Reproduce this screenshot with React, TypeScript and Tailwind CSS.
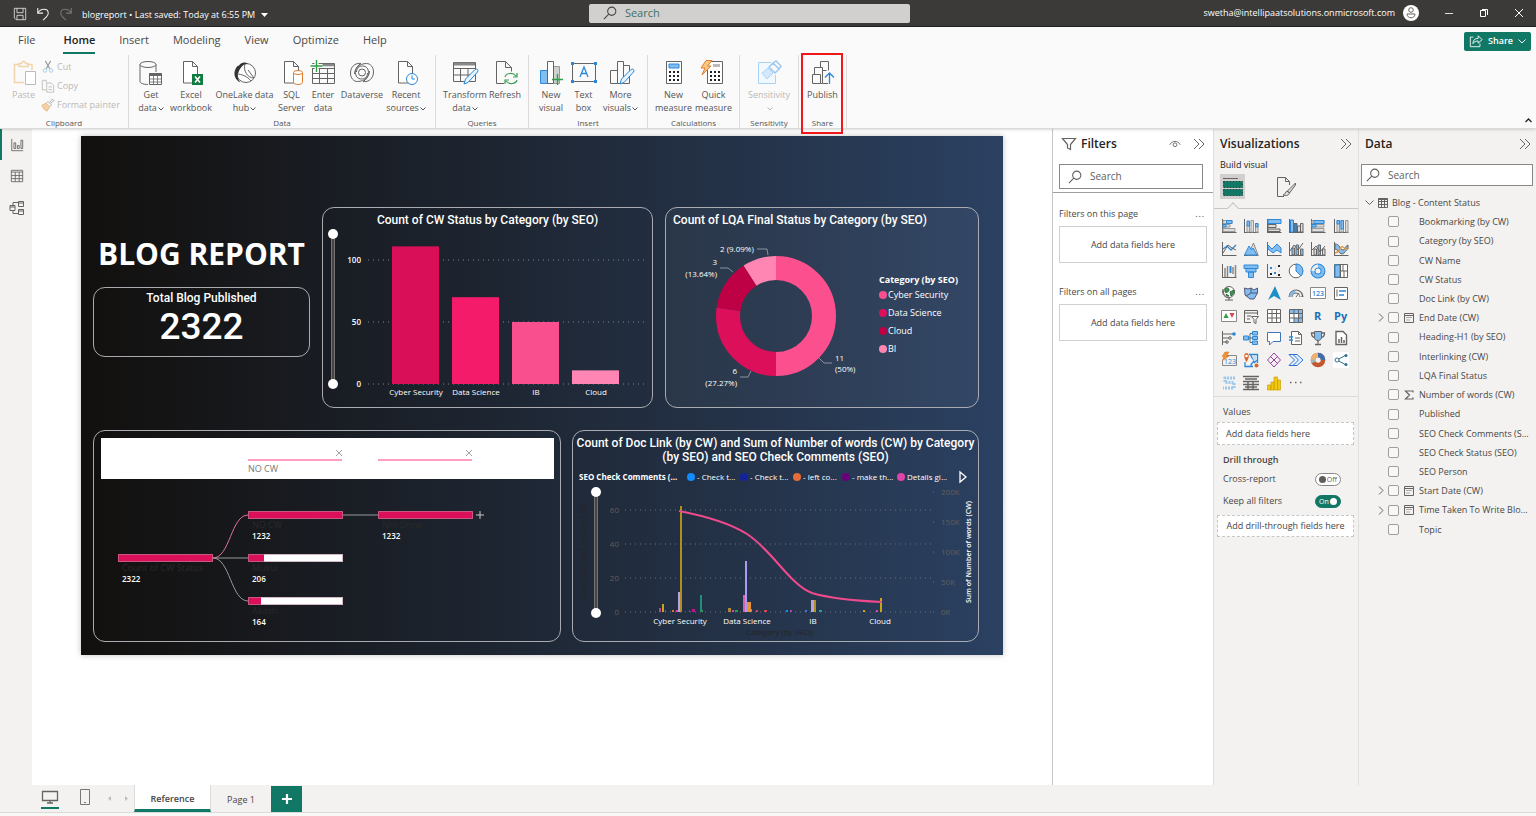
import React from "react";
import clsx from "clsx";

const DARK = "#666462";
const BLUE = "#2b88d8";
const SKY = "#83bdf0";

/* ---------- small helpers ---------- */

interface IconProps {
  size?: number;
  box?: number;
  className?: string;
  children: React.ReactNode;
}

const Icon = ({ size = 16, box = 16, className, children }: IconProps) => (
  <svg
    width={size}
    height={size}
    viewBox={`0 0 ${box} ${box}`}
    fill="none"
    stroke={DARK}
    aria-hidden="true"
    className={clsx("shrink-0 overflow-visible", className)}
  >
    {children}
  </svg>
);

const SearchIcon = ({ className }: { className?: string }) => (
  <Icon size={14} className={className}>
    <circle cx="10" cy="6" r="4.7" stroke="currentColor" strokeWidth="1.2" />
    <path d="M6.6 9.4 1 15" stroke="currentColor" strokeWidth="1.2" />
  </Icon>
);

const DoubleChevron = () => (
  <Icon size={12} box={12}>
    <path d="m1 1 5 5-5 5M6 1l5 5-5 5" />
  </Icon>
);

const Caret = () => (
  <svg width="6" height="4" viewBox="0 0 6 4" fill="none" stroke="currentColor" className="ml-px inline-block">
    <path d="m.5.5 2.5 2.5L5.5.5" />
  </svg>
);

/* ---------- ribbon icons, drawn on a 26px box ---------- */

const Doc = () => (
  <path d="M5.500 1.500h9l5 5v16.500h-14zM14.500 1.500v5h5" fill="#fff" />
);

const Pencil = () => (
  <path d="m12 24 1.500-5L23 9.500q1.500-1 2.500 0t0 2.500L16 22.500z" fill="#e6f2fc" stroke={BLUE} />
);

const icons = {
  getData: (
    <>
      <ellipse cx="10" cy="4.500" rx="8" ry="3" />
      <path d="M2 4.500v17c0 1.500 3 3 8 3M18 4.500V12" />
      <path d="M11.500 13.500h12v11h-12z" fill="#fff" />
      <path d="M11.500 14.500h12" strokeWidth="3" />
      <path d="M11.500 19h12M11.500 22h12M15.500 16v8M19.500 16v8" strokeWidth=".8" />
    </>
  ),
  excel: (
    <>
      <Doc />
      <path d="M14 14h11v11H14z" fill="#107c41" stroke="none" />
      <path d="m17 16.500 5 6M22 16.500l-5 6" stroke="#fff" strokeWidth="1.600" />
    </>
  ),
  onelake: (
    <>
      <circle cx="14" cy="13" r="9.500" fill="#fff" />
      <path d="M8 9C5 14 5 19 8.500 22.500 3 20 1 14 3.500 9 4.500 6.500 6 5.500 7 5.500c2-3.500 7-4 9-1.500-3-.5-6 1.500-8 5z" fill="#333" stroke="none" />
      <path d="M13 4c-2 6 2 14 9 14M22 18 16 10M5 14c4 0 10 2 14 7" />
    </>
  ),
  sql: (
    <>
      <Doc />
      <path d="M14.500 12.500v10c0 1 2 2 4.500 2s4.500-1 4.500-2v-10z" fill="#fff" stroke="#e07c30" />
      <ellipse cx="19" cy="12.500" rx="4.500" ry="2" fill="#fff" stroke="#e07c30" />
    </>
  ),
  enter: (
    <>
      <path d="M2.500 3.500h22v20h-22zM2.500 8.500h22M2.500 13.500h22M2.500 18.500h22M9.500 8.500v15M17.500 8.500v15" />
      <path d="M9 5h15" strokeWidth="2.500" stroke="#888" />
      <path d="M6.500 0v12M.5 6h12" stroke="#fff" strokeWidth="4" />
      <path d="M6.500 0v12M.5 6h12" stroke="#2ea043" strokeWidth="1.400" />
    </>
  ),
  dataverse: (
    <>
      <circle cx="13" cy="12.500" r="3.500" />
      <path d="M18.500 13c0 4-3 6-6 6-4 0-6-3-6-6.500C6.500 8 9 5 12 3.500 6 2.500 1.500 7 1.500 13c0 5 3 8.500 7 8.500 7 0 12-5 12-10.500" />
      <path d="M7.500 12c0-4 3-6 6-6 4 0 6 3 6 6.500 0 4.500-2.500 7.500-5.500 9 6 1 10.500-3.500 10.500-9.500 0-5-3-8.500-7-8.500-7 0-12 5-12 10.500" />
    </>
  ),
  recent: (
    <>
      <Doc />
      <circle cx="19" cy="19" r="5.500" fill="#fff" stroke={BLUE} />
      <path d="M19 15.500V19h3" stroke={BLUE} />
    </>
  ),
  transform: (
    <>
      <path d="M1.500 2.500h22v19h-22zM1.500 8.500h22M1.500 15h22M8.500 8.500v13M16 8.500v13" />
      <path d="M2 4h21" strokeWidth="3" stroke="#888" />
      <Pencil />
    </>
  ),
  refresh: (
    <>
      <path d="M12 23.500H4.500v-22h9l6 6v4M13.500 1.500v6h6" />
      <path d="M13 17c1-4 8-5 11-1M25 13v4h-4M25 20c-1 4-8 5-11 1M13 24v-4h4" stroke="#3a9a52" strokeWidth="1.200" />
    </>
  ),
  newVisual: (
    <>
      <path d="M2.500 10.500h7v13h-7z" fill={SKY} stroke={BLUE} />
      <path d="M15.500 6.500h6v17h-6z" fill="#d0d0d0" stroke="#999" />
      <path d="M9.500 1.500h6v22h-6z" fill="#fff" />
      <path d="M19.500 14v11M14 19.500h11" stroke="#2ea043" strokeWidth="1.400" />
    </>
  ),
  textBox: (
    <>
      <path d="M1.500 3.500h23v18h-23z" stroke="#666" />
      <path d="m9 17 4-10 4 10M10.500 13.500h5" stroke={BLUE} strokeWidth="1.300" />
      <path d="M0 2h3v3H0zM23 2h3v3h-3zM0 20h3v3H0zM23 20h3v3h-3z" fill={BLUE} stroke="none" />
    </>
  ),
  moreVisuals: (
    <>
      <path d="M2.500 10.500h7v13h-7zM9.500 1.500h6v22h-6zM15.500 5.500h6v18h-6z" />
      <Pencil />
    </>
  ),
  newMeasure: (
    <>
      <path d="M5.500 1.500h15v22h-15z" fill="#fff" />
      <path d="M8 4h10v4H8z" fill={SKY} stroke={BLUE} />
      <path d="M8 12h10M8 16h10M8 20h10" stroke="#222" strokeWidth="2" strokeDasharray="2 2" />
    </>
  ),
  quickMeasure: (
    <>
      <path d="M6.500 1.500h15v22h-15z" fill="#fff" />
      <path d="M12 5.500h7" stroke="#bbb" strokeWidth="3" />
      <path d="M9 12h10M9 16h10M9 20h10" stroke="#222" strokeWidth="2" strokeDasharray="2 2" />
      <path d="M5 .5h6L6.500 6H10L1 15l3-7H0z" fill="#fcc77e" stroke="#e07c30" />
    </>
  ),
  sensitivity: (
    <>
      <path d="M15 2.500H2.500v21h17V15" stroke="#a9d3f5" fill="#f1f8fe" />
      <path d="m6 13 6-5 5 5-6 6z" stroke="#a9d3f5" fill="#d3e8fa" />
      <path d="m13 7 4-4 6 6-4 4zM17 3l3-2 5 5-2 3" stroke="#9cc8ec" strokeWidth="1.500" />
    </>
  ),
  publish: (
    <>
      <path d="M2.500 14.500h8v9h-8zM4.500 14.500v-7h8v16h-2M10.500 7.500v-6h8v9M12.500 12.500v-2h4M12.500 23.500H18" />
      <path d="M19.500 24V13M15 17.500l4.500-4.500 4.500 4.500" stroke={BLUE} strokeWidth="1.300" />
    </>
  ),
};

interface RibbonItem {
  icon: keyof typeof icons;
  lines: string[];
  width: string;
  caret?: boolean;
  disabled?: boolean;
}

interface RibbonGroupData {
  name: string;
  className: string;
  items: RibbonItem[];
}

const ribbon: RibbonGroupData[] = [
  {
    name: "Data",
    className: "w-[307px]",
    items: [
      { icon: "getData", lines: ["Get", "data"], width: "w-[40px]", caret: true },
      { icon: "excel", lines: ["Excel", "workbook"], width: "w-[40px]" },
      { icon: "onelake", lines: ["OneLake data", "hub"], width: "w-[67px]", caret: true },
      { icon: "sql", lines: ["SQL", "Server"], width: "w-[27px]" },
      { icon: "enter", lines: ["Enter", "data"], width: "w-[36px]" },
      { icon: "dataverse", lines: ["Dataverse"], width: "w-[42px]" },
      { icon: "recent", lines: ["Recent", "sources"], width: "w-[46px]", caret: true },
    ],
  },
  {
    name: "Queries",
    className: "w-[93px]",
    items: [
      { icon: "transform", lines: ["Transform", "data"], width: "w-[46px]", caret: true },
      { icon: "refresh", lines: ["Refresh"], width: "w-[34px]" },
    ],
  },
  {
    name: "Insert",
    className: "w-[119px]",
    items: [
      { icon: "newVisual", lines: ["New", "visual"], width: "w-[31px]" },
      { icon: "textBox", lines: ["Text", "box"], width: "w-[34px]" },
      { icon: "moreVisuals", lines: ["More", "visuals"], width: "w-[40px]", caret: true },
    ],
  },
  {
    name: "Calculations",
    className: "w-[92px]",
    items: [
      { icon: "newMeasure", lines: ["New", "measure"], width: "w-[40px]" },
      { icon: "quickMeasure", lines: ["Quick", "measure"], width: "w-[40px]" },
    ],
  },
  {
    name: "Sensitivity",
    className: "w-[59px]",
    items: [{ icon: "sensitivity", lines: ["Sensitivity", ""], width: "w-[46px]", caret: true, disabled: true }],
  },
  {
    name: "Share",
    className: "w-[48px]",
    items: [{ icon: "publish", lines: ["Publish"], width: "w-[40px]" }],
  },
];

const RibbonButton = ({ icon, lines, width, caret, disabled }: RibbonItem) => (
  <button
    type="button"
    disabled={disabled}
    className={clsx(
      "flex flex-col items-center whitespace-nowrap leading-[13px]",
      width,
      disabled ? "text-[#bbb9b7]" : "text-[#555]"
    )}
  >
    <Icon size={26} box={26} className="mb-0.5">
      {icons[icon]}
    </Icon>
    {lines.map((line, index) => (
      <span key={index}>
        {line}
        {caret && index === lines.length - 1 && <Caret />}
      </span>
    ))}
  </button>
);

const RibbonGroup = ({ name, className, items }: RibbonGroupData) => (
  <section
    aria-label={name}
    className={clsx(
      "relative flex shrink-0 flex-col justify-between border-r border-[#dddbd9] pt-[5px]",
      className
    )}
  >
    <div className={clsx("flex items-start", name === "Data" ? "pl-0.5" : "justify-center")}>
      {items.map((item) => (
        <RibbonButton key={item.icon} {...item} />
      ))}
    </div>
    <span className="text-center text-[8px] leading-[10px] text-[#555]">{name}</span>
    {name === "Share" && (
      <span className="absolute -top-0.5 -bottom-1.5 left-0.5 z-10 w-[42px] border-2 border-[#f0161a]" />
    )}
  </section>
);

const Clipboard = () => (
  <section
    aria-label="Clipboard"
    className="flex w-[129px] shrink-0 flex-col justify-between border-r border-[#dddbd9] pt-[5px]"
  >
    <div className="flex gap-1 pl-2.5 text-[#bbb9b7]">
      <button type="button" disabled className="flex w-[27px] flex-col items-center leading-[13px]">
        <Icon size={26} box={26} className="mb-0.5">
          <path d="M8 4.500H3.500v18H13M17 4.500h4V10M8 6.500v-3h2.500c1-3 3-3 4 0H17v3z" stroke="#f3d3ab" strokeWidth="1.500" />
          <path d="M14.500 11.500h10v13h-10z" fill="#fff" stroke="#bbb" />
        </Icon>
        Paste
      </button>
      <div className="flex flex-col items-start gap-[5px] leading-[14px]">
        <button type="button" disabled className="flex items-center gap-0.5">
          <Icon size={14}>
            <path d="M5 1l5 9M11 1 6 10" stroke="#999" strokeWidth="1.300" />
            <circle cx="4.500" cy="12" r="2" stroke="#9cc8ec" />
            <circle cx="11.500" cy="12" r="2" stroke="#9cc8ec" />
          </Icon>
          Cut
        </button>
        <button type="button" disabled className="flex items-center gap-0.5">
          <Icon size={14}>
            <path d="M6 4V1.500H1.500v11H6M6.500 4.500h5l3 3v7.500h-8zM8.500 9h4M8.500 12h4" stroke="#bbb" />
          </Icon>
          Copy
        </button>
        <button type="button" disabled className="flex items-center gap-0.5 whitespace-nowrap">
          <Icon size={14}>
            <path d="m1 8 5-2 4 4-3 5c-3-1-5-3-6-7z" fill="#f7cfa4" stroke="#e5b98a" />
            <path d="m6 6 2-2 4 4-2 2M10 5l3-4 2 2-4 3" stroke="#aaa" />
          </Icon>
          Format painter
        </button>
      </div>
    </div>
    <span className="text-center text-[8px] leading-[10px] text-[#555]">Clipboard</span>
  </section>
);

/* ---------- window chrome ---------- */

const TitleBar = () => (
  <header className="flex h-[27px] items-center border-b border-[#222] bg-[#3b3a39] text-[9px] text-white">
    <div className="flex flex-[588_1_0] items-center gap-[9px] pt-0.5 pl-[13px]">
      <button type="button" aria-label="Save">
        <Icon size={14}>
          <path d="M1.500 1.500h13v13h-11l-2-2zM4.500 1.500v5h7v-5M4.500 14.500v-5h7v5" stroke="#ddd" />
        </Icon>
      </button>
      <button type="button" aria-label="Undo">
        <Icon size={14}>
          <path d="M2 1v6h6M2 7c3-6 12-6 12 0 0 3-3 5-6 8" stroke="#eee" strokeWidth="1.200" />
        </Icon>
      </button>
      <button type="button" aria-label="Redo" disabled>
        <Icon size={14}>
          <path d="M14 1v6H8M14 7C11 1 2 1 2 7c0 3 3 5 6 8" stroke="#777" strokeWidth="1.200" />
        </Icon>
      </button>
      <span className="flex items-center gap-1.5 pt-0.5">
        blogreport • Last saved: Today at 6:55 PM
        <svg width="7" height="4" viewBox="0 0 7 4" fill="#fff">
          <path d="M0 0h7L3.500 4z" />
        </svg>
      </span>
    </div>
    <label className="flex h-[19px] w-[321px] items-center gap-2 rounded-[2px] bg-[#d2d0ce] pl-3.5 text-[#444]">
      <SearchIcon />
      <input
        type="search"
        aria-label="Search"
        placeholder="Search"
        className="min-w-0 flex-1 bg-transparent text-[11px] outline-none placeholder:text-[#3f6f63]"
      />
    </label>
    <div className="flex flex-[627_1_0] items-center justify-end pr-3">
      <span className="mr-2">swetha@intellipaatsolutions.onmicrosoft.com</span>
      <Icon size={16}>
        <circle cx="8" cy="8" r="8" fill="#fff" stroke="none" />
        <circle cx="8" cy="5" r="2.300" />
        <path d="M4 9h8c0 5-8 5-8 0z" />
      </Icon>
      <div className="ml-[25px] flex items-center gap-[25px]">
        <button type="button" aria-label="Minimize">
          <Icon size={10} box={10}>
            <path d="M1 5.500h8" stroke="#ddd" />
          </Icon>
        </button>
        <button type="button" aria-label="Restore">
          <Icon size={10} box={10}>
            <path d="M1.500 2.500h5v6h-5zM3 1.500h5.500V7" stroke="#fff" />
          </Icon>
        </button>
        <button type="button" aria-label="Close">
          <Icon size={10} box={10}>
            <path d="m1 1 8 8M9 1 1 9" stroke="#fff" />
          </Icon>
        </button>
      </div>
    </div>
  </header>
);

const tabs = ["File", "Home", "Insert", "Modeling", "View", "Optimize", "Help"];

const Ribbon = () => (
  <div className="relative z-10 border-b border-[#dcdad8] bg-[#fafafa] shadow-sm">
    <nav className="flex h-[28px] items-center gap-[24px] pr-[5px] pl-[18px] text-[11px] text-[#4a4846]">
      {tabs.map((tab) => (
        <button
          key={tab}
          type="button"
          className={clsx(
            "h-[25px] border-b-2 leading-[22px]",
            tab === "Home" ? "border-[#117865] font-semibold text-[#222]" : "border-transparent",
            tab === "File" && "mr-1"
          )}
        >
          {tab}
        </button>
      ))}
      <button
        type="button"
        className="ml-auto flex h-[19px] items-center gap-[5px] rounded-[2px] bg-[#117865] px-[5px] text-[9px] font-semibold text-white"
      >
        <Icon size={14}>
          <path d="M5 3.500H1.500v11h11V11M4.500 11c0-4 2-6 6-6V2l4.500 4.500-4.500 4V8c-3 0-5 1-6 3z" stroke="#fff" />
        </Icon>
        Share
        <svg width="8" height="5" viewBox="0 0 8 5" fill="none" stroke="#fff">
          <path d="m.5.5 3.500 3.500L7.500.5" />
        </svg>
      </button>
    </nav>
    <div className="flex h-[73px] text-[9px]">
      <Clipboard />
      {ribbon.map((group) => (
        <RibbonGroup key={group.name} {...group} />
      ))}
      <button type="button" aria-label="Collapse ribbon" className="ml-auto self-end pr-1 pb-1">
        <Icon size={7} box={7}>
          <path d="m.5 5 3-3 3 3" stroke="#222" strokeWidth="1.300" />
        </Icon>
      </button>
    </div>
  </div>
);

const ViewRail = () => (
  <nav className="flex w-8 shrink-0 flex-col bg-[#f3f2f1]">
    <button
      type="button"
      aria-label="Report view"
      className="flex h-[31px] items-center justify-center border-l-2 border-[#117865]"
    >
      <Icon size={14}>
        <path d="M2 1v13.500h13M4.500 12V5.500h2V12zM8.500 12V8.500h2V12zM12.500 12V2.500h2V12z" />
      </Icon>
    </button>
    <button type="button" aria-label="Table view" className="flex h-8 items-center justify-center pl-0.5">
      <Icon size={14}>
        <path d="M1.500 1.500h13v13h-13zM1.500 3.500h13M1.500 7.500h13M1.500 11h13M6 3.500v11M10.500 3.500v11" />
      </Icon>
    </button>
    <button type="button" aria-label="Model view" className="flex h-8 items-center justify-center pl-0.5">
      <Icon size={16}>
        <path d="M1 5.500h5v5H1zM1 7h5M9.500 1.500h5v5h-5zM9.500 3h5M9.500 9.500h5v5h-5zM9.500 11h5M4 5V2.500h5M4 11v2.500h5" />
      </Icon>
    </button>
  </nav>
);

/* ---------- report page visuals ---------- */

const Card = ({ className, ...props }: React.HTMLAttributes<HTMLDivElement>) => (
  <div {...props} className={clsx("overflow-hidden rounded-xl border border-[#a9abb0]", className)} />
);

const VisualTitle = ({ className, children }: { className?: string; children: React.ReactNode }) => (
  <h2
    className={clsx(
      "font-[Roboto,sans-serif] text-[12px] leading-[14px] font-medium text-white",
      className
    )}
  >
    {children}
  </h2>
);

const ZoomSlider = ({ x, top, bottom }: { x: number; top: number; bottom: number }) => (
  <>
    <path d={`M${x} ${top}V${bottom}`} stroke="#a19f9d" strokeWidth="4" />
    <path d={`M${x} ${top}V${bottom}`} stroke="#484644" strokeWidth="3" />
    <circle cx={x} cy={top} r="5" fill="#fff" />
    <circle cx={x} cy={bottom} r="5" fill="#fff" />
  </>
);

const statusBars = [
  { name: "Cyber Security", value: 111, color: "#d90f58" },
  { name: "Data Science", value: 70, color: "#f41c6a" },
  { name: "IB", value: 50, color: "#f94f8e" },
  { name: "Cloud", value: 11, color: "#ff86b4" },
];

const StatusChart = () => (
  <Card>
    <VisualTitle className="pt-[5px] text-center">Count of CW Status by Category (by SEO)</VisualTitle>
    <svg viewBox="1 0 329 180" className="w-full text-[8px]" fill="#fff">
      {[100, 50, 0].map((tick) => (
        <g key={tick}>
          <text x="39" y={160 - tick * 1.24} textAnchor="end" fontWeight="600">
            {tick}
          </text>
          <path d={`M46 ${157 - tick * 1.24}H325`} stroke="#7d8592" strokeDasharray="1 4" />
        </g>
      ))}
      {statusBars.map(({ name, value, color }, index) => (
        <g key={name}>
          <rect x={70 + index * 60} y={157 - value * 1.24} width="47" height={value * 1.24} fill={color} />
          <text x={94 + index * 60} y="168" textAnchor="middle">
            {name}
          </text>
        </g>
      ))}
      <ZoomSlider x={11} top={7} bottom={157} />
    </svg>
  </Card>
);

const slices = [
  { name: "Cyber Security", count: 11, start: 0, color: "#fb4f8e" },
  { name: "Data Science", count: 6, start: 11, color: "#dc0f5a" },
  { name: "Cloud", count: 3, start: 17, color: "#be0045" },
  { name: "BI", count: 2, start: 20, color: "#ff86b2" },
];

const LqaChart = () => (
  <Card className="bg-white/4">
    <VisualTitle className="pt-[5px] pl-[7px]">Count of LQA Final Status by Category (by SEO)</VisualTitle>
    <svg viewBox="0 0 312 180" className="w-full text-[8px]" fill="#fff">
      <g fill="none" strokeWidth="24" transform="rotate(-90 110 89)">
        {slices.map(({ name, count, start, color }) => (
          <circle
            key={name}
            cx="110"
            cy="89"
            r="48"
            pathLength="22"
            stroke={color}
            strokeDasharray={`${count} ${22 - count}`}
            strokeDashoffset={-start}
          />
        ))}
      </g>
      <path
        d="M91 22h10l1 6M54 41h8l5 4M153 131l5 5h8M74 150h8l3-6"
        fill="none"
        stroke="#8a929f"
      />
      <text x="54" y="25">2 (9.09%)</text>
      <text x="51" y="38" textAnchor="end">3</text>
      <text x="51" y="50" textAnchor="end">(13.64%)</text>
      <text x="169" y="134">11</text>
      <text x="169" y="145">(50%)</text>
      <text x="71" y="147" textAnchor="end">6</text>
      <text x="71" y="159" textAnchor="end">(27.27%)</text>
      <text x="213" y="56" fontWeight="700" className="text-[9px]">
        Category (by SEO)
      </text>
      {slices.map(({ name, color }, index) => (
        <g key={name}>
          <circle cx="217" cy={68 + index * 18} r="4" fill={color} />
          <text x="222" y={71 + index * 18} className="text-[9px]">
            {name}
          </text>
        </g>
      ))}
    </svg>
  </Card>
);

const treeNodes = [
  { name: "Count of CW Status", value: 2322, x: 24, y: 123, fill: 95 },
  { name: "NO CW", value: 1232, x: 154, y: 80, fill: 95 },
  { name: "Mukul", value: 206, x: 154, y: 123, fill: 16 },
  { name: "Akash", value: 164, x: 154, y: 166, fill: 13 },
  { name: "Not Done", value: 1232, x: 284, y: 80, fill: 95 },
];

const StatusTree = () => (
  <Card>
    <svg viewBox="0 0 466 210" className="w-full text-[9px]" fill="none">
      <path d="M7 7h453v41H7z" fill="#fff" />
      <path d="M154 29h94M284 29h94" stroke="#ff7fae" strokeWidth="1.500" />
      <path d="m242 19 6 6m0-6-6 6M372 19l6 6m0-6-6 6" stroke="#a5a3a1" />
      <text x="154" y="41" fill="#777" className="text-[9px]">
        NO CW
      </text>
      <path d="M119 127c17 0 18-43 35-43" stroke="#e0709c" />
      <path d="M119 127h35M119 127c17 0 18 43 35 43M248 84h36" stroke="#9a9896" />
      {treeNodes.map(({ name, value, x, y, fill }) => (
        <g key={name}>
          <rect x={x} y={y} width="95" height="8" fill="#fff" />
          <rect x={x} y={y} width={fill} height="8" fill="#dc0f5a" />
          <path d={`M${x + 0.5} ${y + 0.5}h94v7h-94z`} stroke="#b58a9b" strokeOpacity=".6" />
          <text x={x + 4} y={y + 17} fill="#2b2928">
            {name}
          </text>
          <text x={x + 4} y={y + 28} fill="#fff" fontWeight="600" className="text-[8px]">
            {value}
          </text>
        </g>
      ))}
      <path d="M382 84h8M386 80v8" stroke="#c8c6c4" />
    </svg>
  </Card>
);

const commentLegend = [
  { label: "- Check t...", x: 118, color: "#118dff" },
  { label: "- Check t...", x: 171, color: "#12239e" },
  { label: "- left co...", x: 224, color: "#e66c37" },
  { label: "- make th...", x: 273, color: "#6b007b" },
  { label: "Details gi...", x: 328, color: "#e044a7" },
];

/* [x, width, height, colour] of every thin column */
const columns: [number, number, number, string][] = [
  [86, 2, 4, "#b0449a"],
  [89, 2, 8, "#c9a415"],
  [92, 1, 2, "#744ec2"],
  [99, 2, 2, "#e66c37"],
  [103, 2, 2, "#e044a7"],
  [105, 2, 20, "#b5a1e6"],
  [107, 2, 106, "#b08f1c"],
  [116, 1, 2, "#3b5bd0"],
  [119, 3, 3, "#c0148c"],
  [127, 2, 17, "#1f8f7a"],
  [129, 1, 2, "#3a9a52"],
  [155, 3, 4, "#a8883a"],
  [159, 2, 2, "#e044a7"],
  [162, 3, 2, "#1aab40"],
  [170, 2, 17, "#d860b0"],
  [172, 2, 51, "#a99cf0"],
  [174, 4, 10, "#e8923a"],
  [178, 1, 3, "#15c6b0"],
  [183, 2, 2, "#d64550"],
  [191, 3, 2, "#d64550"],
  [213, 2, 2, "#118dff"],
  [217, 2, 2, "#b0449a"],
  [232, 2, 2, "#3b7be0"],
  [238, 3, 12, "#b5a1e6"],
  [241, 2, 12, "#b08f1c"],
  [246, 3, 2, "#15a6a0"],
  [290, 2, 2, "#c9a415"],
  [303, 2, 2, "#e044a7"],
  [307, 2, 14, "#c9a415"],
];

const DocLinkChart = () => (
  <Card>
    <VisualTitle className="pt-[5px] text-center">
      Count of Doc Link (by CW) and Sum of Number of words (CW) by Category (by SEO) and SEO Check Comments (SEO)
    </VisualTitle>
    <svg viewBox="0 0 405 177" className="w-full text-[8px]" fill="#fff">
      <text x="6" y="16" fontWeight="700">SEO Check Comments (...</text>
      {commentLegend.map(({ label, x, color }) => (
        <g key={x}>
          <circle cx={x} cy="13" r="4" fill={color} />
          <text x={x + 6} y="16">
            {label}
          </text>
        </g>
      ))}
      <path d="m387 8 6 5-6 5z" fill="none" stroke="#fff" strokeWidth="1.300" />
      {[60, 40, 20, 0].map((tick) => (
        <g key={tick}>
          <text x="46" y={151 - tick * 1.7} textAnchor="end" fill="#605e5c">
            {tick}
          </text>
          <path d={`M52 ${148 - tick * 1.7}H362`} stroke="#66707f" strokeDasharray="1 4" />
        </g>
      ))}
      {[200, 150, 100, 50, 0].map((tick) => (
        <g key={tick}>
          <text x="368" y={151 - tick * 0.6} fill="#605e5c">
            {tick}K
          </text>
          <path d={`M360 ${148 - tick * 0.6}h1`} stroke="#66707f" />
        </g>
      ))}
      {columns.map(([x, width, height, color]) => (
        <rect key={x} x={x} y={148 - height} width={width} height={height} fill={color} />
      ))}
      <path
        d="M106 47c26 5 49 11 68 23 25 16 43 51 65 59 20 6 48 8 70 9"
        fill="none"
        stroke="#f04a8c"
        strokeWidth="2"
      />
      <text x="107" y="160" textAnchor="middle">Cyber Security</text>
      <text x="174" y="160" textAnchor="middle">Data Science</text>
      <text x="240" y="160" textAnchor="middle">IB</text>
      <text x="307" y="160" textAnchor="middle">Cloud</text>
      <text x="206" y="171" textAnchor="middle" fill="#252423">Category (by SEO)</text>
      <text transform="translate(13 88) rotate(-90)" textAnchor="middle" fill="#252423">
        Count of Doc Link (by CW)
      </text>
      <text transform="translate(398 88) rotate(-90)" textAnchor="middle" fontWeight="600" className="text-[7px]">
        Sum of Number of words (CW)
      </text>
      <ZoomSlider x={23} top={28} bottom={149} />
    </svg>
  </Card>
);

const ReportPage = () => (
  <article className="flex aspect-[922/519] flex-col gap-[22px] bg-linear-to-r from-[#12100e] to-[#2b4162] pt-[71px] pr-6 pl-3 text-white shadow-[0_0_6px_rgba(0,0,0,0.25)]">
    <div className="grid grid-cols-[217fr_331fr_314fr] gap-3">
      <div className="flex flex-col">
        <h1 className="pt-[26px] pb-[13px] text-center text-[30px] leading-[41px] font-bold whitespace-nowrap">
          BLOG REPORT
        </h1>
        <Card className="h-[70px] text-center font-[Roboto,sans-serif]">
          <VisualTitle className="pt-[3px]">Total Blog Published</VisualTitle>
          <p className="pt-0.5 text-[37px] leading-[40px] font-medium">2322</p>
        </Card>
      </div>
      <StatusChart />
      <LqaChart />
    </div>
    <div className="grid grid-cols-[468fr_407fr] gap-[11px]">
      <StatusTree />
      <DocLinkChart />
    </div>
  </article>
);

/* ---------- filters pane ---------- */

const PaneSearch = ({ label, className }: { label: string; className?: string }) => (
  <label
    className={clsx("flex items-center gap-2 border border-[#8a8886] bg-white text-[#605e5c]", className)}
  >
    <SearchIcon />
    <input
      type="search"
      aria-label={label}
      placeholder="Search"
      className="min-w-0 flex-1 bg-transparent text-[10px] outline-none placeholder:text-[#605e5c]"
    />
  </label>
);

const FilterWell = ({ title }: { title: string }) => (
  <section className="mb-[22px]">
    <div className="flex h-[19px] items-start justify-between pr-0.5 leading-[13px]">
      <h3>{title}</h3>
      <button type="button" aria-label="More options" className="tracking-widest">
        ...
      </button>
    </div>
    <div className="flex h-[37px] items-center justify-center border border-[#d2d0ce] bg-white">
      Add data fields here
    </div>
  </section>
);

const FiltersPane = () => (
  <aside className="w-[161px] shrink-0 border-l border-[#c8c6c4] bg-white text-[9px] text-[#484644]">
    <div className="flex h-[35px] items-center pr-2 pb-1.5 pl-2">
      <Icon size={16}>
        <path d="M1.500 2.500h13L9.500 8.500v5l-3-1.500V8.500z" strokeWidth="1.200" />
      </Icon>
      <h2 className="ml-1 flex-1 text-[12px] font-semibold text-[#252423]">Filters</h2>
      <Icon size={12} className="mr-3">
        <path d="M1 9c3-6 11-6 14 0" strokeWidth="1.200" />
        <circle cx="8" cy="9" r="2.500" strokeWidth="1.200" />
      </Icon>
      <DoubleChevron />
    </div>
    <div className="border-b border-[#a19f9d] pr-2.5 pb-[3px] pl-1.5">
      <PaneSearch label="Search filters" className="h-[25px] pl-2" />
    </div>
    <div className="px-1.5 pt-3.5">
      <FilterWell title="Filters on this page" />
      <FilterWell title="Filters on all pages" />
    </div>
  </aside>
);

/* ---------- visualizations pane ---------- */

const Axis = () => <path d="M1.500 1v14M1 14.500h14.500" />;

const visuals: { name: string; art: React.ReactNode }[] = [
  { name: "Stacked bar chart", art: <><Axis /><path d="M2 2.500h9v3H2zM2 6.500h7v2.500H2zM2 10.500h12v3H2z" fill="#ddd" stroke="#999" /><path d="M5.500 2.500H11v3H5.500zM2 6.500h3v2.500H2z" fill={SKY} stroke={BLUE} /></> },
  { name: "Stacked column chart", art: <><Axis /><path d="M4 6.500h2.500V14H4zM8 2.500h2.500V14H8zM12.500 5.500H15V14h-2.500z" fill="#ddd" stroke="#999" /><path d="M4 3h2.500v5H4zM12.500 5.500H15V9h-2.500z" fill={SKY} stroke={BLUE} /></> },
  { name: "Clustered bar chart", art: <><Axis /><path d="M2 1.500h13v4H2z" fill={SKY} stroke={BLUE} /><path d="M2 6.500h8v3H2zM2 11h12v2.500H2z" fill="#ddd" /></> },
  { name: "Clustered column chart", art: <><Axis /><path d="M2.500 2h3v12h-3z" fill={SKY} stroke={BLUE} /><path d="M6 5.500h3V14H6z" fill={BLUE} /><path d="M9.500 8h3v6h-3zM12.500 5.500h2.500V14h-2.500z" fill="#ddd" /></> },
  { name: "100% stacked bar chart", art: <><Axis /><path d="M2 2.500h12v3H2zM2 6.500h12v2.500H2zM2 10.500h12v3H2z" fill="#ddd" stroke="#999" /><path d="M4 2.500h10v3H4zM2 6.500h4v2.500H2z" fill={SKY} stroke={BLUE} /></> },
  { name: "100% stacked column chart", art: <><Axis /><path d="M4 2.500h2.500V14H4zM8 2.500h2.500V14H8zM12.500 2.500H15V14h-2.500z" fill="#ddd" stroke="#999" /><path d="M4 2.500h2.500V6H4zM8 2.500h2.500V11H8z" fill={SKY} stroke={BLUE} /></> },
  { name: "Line chart", art: <><Axis /><path d="m2 8 4-3 4 4 5-5" stroke={BLUE} strokeWidth="1.300" /><path d="m2 12 5-8 4 3 4 2" /></> },
  { name: "Area chart", art: <><path d="M1 14.500h14.500" /><path d="m5 14 5.500-12L15 14z" fill="#ddd" stroke="#888" /><path d="M1.500 14 6 5l2.500 4L10 7l4 7z" fill={SKY} stroke={BLUE} /></> },
  { name: "Stacked area chart", art: <><Axis /><path d="m2 4 4 4 5-5 4 4v5l-4-3-4 3-5-4z" fill={SKY} stroke={BLUE} /></> },
  { name: "Line and stacked column chart", art: <><Axis /><path d="M4 7h2.500v7H4zM8 4h2.500v10H8zM12.500 8H15v6h-2.500z" fill={SKY} stroke="#666" /><path d="m2 10 4-6 4 5 5-7" /></> },
  { name: "Line and clustered column chart", art: <><Axis /><path d="M4 8h2.500v6H4zM12.500 8H15v6h-2.500z" fill="#ddd" /><path d="M8 4h2.500v10H8z" fill={SKY} /><path d="m2 9 4-4 4 6 5-6" /></> },
  { name: "Ribbon chart", art: <><Axis /><path d="M2 3c5 0 5 6 8 6 2 0 3-5 5-5v4c-2 0-3 5-6 5-3 0-4-5-7-5z" fill={SKY} stroke="#666" /><path d="M2 12c5 0 5-8 8-6s3 3 5 2" stroke="#e8923a" strokeWidth="1.500" /></> },
  { name: "Waterfall chart", art: <><Axis /><path d="M4 14V5M6.500 14V3M12 11V4M14.500 14V2" strokeWidth="1.500" stroke="#888" /><path d="M9.500 3v7" stroke={BLUE} strokeWidth="2" /></> },
  { name: "Funnel", art: <path d="M1 2h14v3.500H1zM3 5.500h10V9H3zM5.500 9h5v5.500h-5z" fill={SKY} stroke={BLUE} /> },
  { name: "Scatter chart", art: <><Axis /><path d="M4 5h2M8 10h2" stroke={BLUE} strokeWidth="2" /><path d="M12 3h2M4 11h2M12 12h2" stroke="#222" strokeWidth="2" /><path d="M9 5h1M13 8h1" stroke={SKY} /></> },
  { name: "Pie chart", art: <><circle cx="8" cy="8" r="6.800" fill="#fff" /><path d="M8 1v7l5 5c3.500-4 2-12-5-12z" fill={SKY} stroke={BLUE} /></> },
  { name: "Donut chart", art: <><circle cx="8" cy="8" r="5" stroke={BLUE} strokeWidth="5" /><circle cx="8" cy="8" r="5" stroke={SKY} strokeWidth="3" /><path d="M3 8a5 5 0 0 1 5-5" stroke="#eee" strokeWidth="3" /></> },
  { name: "Treemap", art: <><path d="M1.500 1.500h13v13h-13z" fill="#fff" /><path d="M2 2h5v12H2z" fill={SKY} stroke={BLUE} /><path d="M7.500 2v12M7.500 8h7M11 8v6M10 2v6" /></> },
  { name: "Map", art: <><circle cx="8" cy="7" r="5.500" fill="#fff" /><path d="M4 4c2-2 4-1 4 1S5 8 4 7zM9 7l4-2c0 3-1 5-3 6zM5 9l3 2H6z" fill="#3a9a52" stroke="#2b6b3b" /><path d="M8 13v2.500M4 15h8M2 4c-2 5 2 9 7 9" /></> },
  { name: "Filled map", art: <path d="M1.500 3 5 4l3-1 3 2 3.500-2v5L11 14H7l-5-4zM8 3v5l-5 3M8 8h6" fill={SKY} stroke="#557" /> },
  { name: "Azure map", art: <path d="m9 1 6 14-7-4-6 4z" fill="#1f8fc8" stroke="none" /> },
  { name: "Gauge", art: <><path d="M2.500 12a5.500 5.500 0 0 1 11 0" strokeWidth="4" /><path d="M3 11.500a5 5 0 0 1 10 0" stroke="#eee" strokeWidth="2" /><path d="M2.500 12a5.500 5.500 0 0 1 5-5.500" stroke={SKY} strokeWidth="2.500" /><path d="m8 12 3-4" /></> },
  { name: "Card", art: <><path d="M.5 2.500h15v11H.5z" fill="#fff" stroke="#888" /><text x="2" y="11" fontSize="7" fill={BLUE} stroke="none" fontWeight="600">123</text></> },
  { name: "Multi-row card", art: <><path d="M1.500 2.500h13v12h-13z" fill="#fff" /><path d="M6 6h7M6 10h5" stroke={BLUE} strokeWidth="1.500" /><path d="M4 4.500v7" /></> },
  { name: "KPI", art: <><path d="M.5 2.500h15v11H.5z" fill="#fff" stroke="#888" /><path d="m2.500 10 2.500-5 2.500 5z" fill="#2ea043" stroke="none" /><path d="m8.500 5 2.500 5 2.500-5z" fill="#d64550" stroke="none" /></> },
  { name: "Slicer", art: <><path d="M8 14.500H1.500v-12h13V7M1.500 5h13M4 8h4M4 11h3" /><path d="M8.500 8.500h7l-2.500 3v4l-2-1v-3z" fill="#fff" /></> },
  { name: "Table", art: <><path d="M1.500 1.500h13v13h-13z" fill="#fff" /><path d="M1.500 5.500h13M1.500 10h13M6 1.500v13M10.500 1.500v13" /></> },
  { name: "Matrix", art: <><path d="M1.500 1.500h13v13h-13z" fill="#fff" /><path d="M2 2h12v3H2zM11 6h3v8h-3zM6 10h4v4H6z" fill={SKY} stroke="none" /><path d="M1.500 5.500h13M1.500 10h13M6 1.500v13M10.500 1.500v13" /></> },
  { name: "R script visual", art: <text x="4" y="12" fontSize="11" fill="#2070b8" stroke="none" fontWeight="700">R</text> },
  { name: "Python visual", art: <text x="1" y="12" fontSize="11" fill="#2070b8" stroke="none" fontWeight="700">Py</text> },
  { name: "Key influencers", art: <><path d="M1.500 1v14M2 4h10M2 8h6M2 12h4" /><circle cx="13" cy="4" r="1.800" fill={BLUE} stroke="none" /><circle cx="9" cy="8" r="1.300" /><circle cx="6" cy="12" r="1.300" /></> },
  { name: "Decomposition tree", art: <><path d="M5 8h4M9 3.500H7v9h2" /><path d="M.5 6h5v4h-5zM9.500 1.500h5v3.500h-5zM9.500 6.500h5v3h-5zM9.500 11h5v3.500h-5z" fill={SKY} stroke={BLUE} /></> },
  { name: "Q&A", art: <path d="M1.500 2.500h13v9H7L3.500 15v-3.500h-2z" fill="#fff" stroke="#3f74b8" /> },
  { name: "Smart narrative", art: <><path d="M3.500 1.500h7l3 3v10h-10z" fill="#fff" /><path d="M10.500 1.500v3h3M7 8h5M7 11h5" /><path d="M1 7h4M1 10h4" stroke={BLUE} strokeWidth="1.500" /></> },
  { name: "Goals", art: <><path d="M4.500 1.500h7v6c0 4-7 4-7 0z" fill={SKY} /><path d="M4 3H1.500c0 3 1 4 3 4.500M12 3h2.500c0 3-1 4-3 4.500M8 10.500v3M5 14.500h6" strokeWidth="1.300" /></> },
  { name: "Paginated report", art: <><path d="M3 1.500h7l3.500 3.500v9.500H3z" fill="#fff" strokeWidth="1.400" /><path d="M6 13V9M8.500 13V7M11 13v-3" strokeWidth="1.500" /></> },
  { name: "Card (new)", art: <><path d="M6 3.500h9.500v10H1.500V9" stroke="#888" /><text x="3" y="12" fontSize="7" fill={BLUE} stroke="none">123</text><path d="M4 0h4L5.500 4H8L1 9l2-4.500H1z" fill="#f0913a" stroke="#d8701c" strokeWidth=".5" /></> },
  { name: "ArcGIS map", art: <><path d="M6 2.500h8.500V11M2 10v4.500h8M8 3c0 4 2 3 3 5s-3 2-3 6M14 8l-3 3" stroke={BLUE} strokeWidth="1.300" /><path d="M9 4h5v4l-3 1z" fill="#c8e0f7" stroke="none" /><path d="M3.500 10C0 5 1 1 3.500 1S7 5 3.500 10z" fill="#d8652b" stroke="none" /><circle cx="3.500" cy="4" r="1.300" fill="#fff" stroke="none" /><circle cx="13.500" cy="13.500" r="2" fill="#d8652b" stroke="none" /></> },
  { name: "Power Apps", art: <path d="m8 1 6.500 7L8 15 1.500 8zM4.500 4.500l7 7M11.500 4.500l-7 7" stroke="#9a3fa0" /> },
  { name: "Power Automate", art: <path d="M1 2.500h8l6 5.500-6 5.500H1L6.500 8zM5 2.500 10.500 8 5 13.500" fill="#e8f2fc" stroke="#2b6fd0" /> },
  { name: "Circular chart", art: <><circle cx="8" cy="8" r="5" stroke="#c4572d" strokeWidth="4.500" /><path d="M3 8a5 5 0 0 1 5-5" stroke="#f0b070" strokeWidth="4.500" /><path d="M8 3a5 5 0 0 1 5 5" stroke="#3b6fb0" strokeWidth="4.500" /><path d="M3.500 10.500a5 5 0 0 1-.5-3" stroke="#9bb" strokeWidth="4.500" /></> },
  { name: "Network graph", art: <><path d="M0 0h16v16H0z" fill="#fff" stroke="none" /><path d="m13 3-9 5 9 5" stroke="#31708f" /><circle cx="4" cy="8" r="2" fill="#fff" stroke="#31708f" /><circle cx="13" cy="3.500" r="1.500" fill="#31708f" stroke="none" /><circle cx="13" cy="12.500" r="1.500" fill="#31708f" stroke="none" /></> },
  { name: "Text search", art: <path d="M14 3H4v4.500h9V13H2" stroke="#9cc8ec" strokeWidth="3" strokeDasharray="2 1" /> },
  { name: "Table heat map", art: <path d="M0 1.500h16M0 6.500h16M0 9.500h16M0 14.500h16M2 4h12M2 12h12M5 7v7M10 7v7" strokeWidth="1.400" /> },
  { name: "Power BI visual", art: <path d="M1.500 10h3.500v5H1.500zM5 7h3v8H5zM8 2h3.500v13H8zM11.500 5h3v10h-3z" fill="#f2c811" stroke="#caa20a" strokeWidth=".7" /> },
  { name: "Get more visuals", art: <path d="M2 7.500h12" strokeWidth="1.300" strokeDasharray="1.500 3.500" /> },
];

const Toggle = ({ label, defaultOn }: { label: string; defaultOn: boolean }) => {
  const [on, setOn] = React.useState(defaultOn);
  return (
    <label className="flex h-[22px] items-center justify-between pr-[13px] pl-1.5">
      {label}
      <input
        type="checkbox"
        role="switch"
        checked={on}
        onChange={() => setOn(!on)}
        className="sr-only"
      />
      <span
        className={clsx(
          "flex h-[13px] w-[26px] items-center justify-between rounded-full border px-[3px] text-[7px] leading-none",
          on
            ? "flex-row-reverse border-[#117865] bg-[#117865] text-white"
            : "border-[#8a8886] bg-white text-[#605e5c]"
        )}
      >
        <span className={clsx("size-[7px] rounded-full", on ? "bg-white" : "bg-[#605e5c]")} />
        {on ? "On" : "Off"}
      </span>
    </label>
  );
};

const VisualizationsPane = () => (
  <aside className="w-[145px] shrink-0 border-l border-[#e1dfdd] bg-[#f3f2f1] text-[9px] text-[#484644]">
    <div className="flex h-[29px] items-center justify-between px-1.5">
      <h2 className="text-[12px] font-semibold text-[#252423]">Visualizations</h2>
      <DoubleChevron />
    </div>
    <h3 className="pl-1.5 leading-[14px] text-[#252423]">Build visual</h3>
    <div className="relative flex h-[37px] items-start gap-7 border-b border-[#c8c6c4] pt-0.5 pl-1.5">
      <button
        type="button"
        aria-label="Build visual"
        className="flex size-[25px] items-center justify-center bg-[#d2d0ce]"
      >
        <Icon size={22} box={22}>
          <path d="M1 2.500h15" />
          <path d="M1.500 5.500h19v6h-19zM1.500 13.500h19v6h-19z" fill="#117865" stroke="#0b4f43" strokeDasharray="2 1" />
        </Icon>
      </button>
      <button type="button" aria-label="Format page" className="flex size-[25px] items-center justify-center">
        <Icon size={22} box={22}>
          <path d="M9 20.500H2.500v-19h8l4 4V9M10.500 1.500v4h4" />
          <path d="m20.500 7-8 8 2 2 6-8zM12 15c-2 1-1 3-4 4 3 1.500 6 0 6.500-2z" fill="#ddd" />
        </Icon>
      </button>
      <span className="absolute -bottom-1 left-[15px] size-2 rotate-45 border-t border-l border-[#c8c6c4] bg-[#f3f2f1]" />
    </div>
    <div className="grid h-[188px] grid-cols-6 grid-rows-8 border-b border-[#dddbd9] pt-1.5 pr-1.5 pb-0.5 pl-1">
      {visuals.map(({ name, art }) => (
        <button key={name} type="button" aria-label={name} className="flex items-center justify-center">
          <Icon size={16}>{art}</Icon>
        </button>
      ))}
    </div>
    <div className="pr-1 pl-[3px]">
      <h3 className="pt-2 pb-1 pl-1.5 leading-[13px]">Values</h3>
      <div className="flex h-[23px] items-center border border-dashed border-[#c8c6c4] bg-white pl-2">
        Add data fields here
      </div>
      <h3 className="pt-2 pb-0.5 pl-1.5 leading-[13px] font-semibold">Drill through</h3>
      <Toggle label="Cross-report" defaultOn={false} />
      <Toggle label="Keep all filters" defaultOn />
      <div className="mt-[3px] flex h-[22px] items-center justify-center border border-dashed border-[#c8c6c4] bg-white whitespace-nowrap">
        Add drill-through fields here
      </div>
    </div>
  </aside>
);

/* ---------- data pane ---------- */

interface Field {
  name: string;
  kind?: "date" | "sum";
}

const fields: Field[] = [
  { name: "Bookmarking (by CW)" },
  { name: "Category (by SEO)" },
  { name: "CW Name" },
  { name: "CW Status" },
  { name: "Doc Link (by CW)" },
  { name: "End Date (CW)", kind: "date" },
  { name: "Heading-H1 (by SEO)" },
  { name: "Interlinking (CW)" },
  { name: "LQA Final Status" },
  { name: "Number of words (CW)", kind: "sum" },
  { name: "Published" },
  { name: "SEO Check Comments (S..." },
  { name: "SEO Check Status (SEO)" },
  { name: "SEO Person" },
  { name: "Start Date (CW)", kind: "date" },
  { name: "Time Taken To Write Blo...", kind: "date" },
  { name: "Topic" },
];

const FieldRow = ({ name, kind }: Field) => (
  <li className="flex items-center pl-[18px]">
    <span className="w-[11px]">
      {kind === "date" && (
        <Icon size={9} box={9}>
          <path d="m2 .5 4 4-4 4" stroke="#666" />
        </Icon>
      )}
    </span>
    <label className="flex items-center whitespace-nowrap">
      <input
        type="checkbox"
        className="size-[11px] appearance-none rounded-[2px] border border-[#a19f9d] bg-[#f8f7f6]"
      />
      <span className="flex w-5 justify-center">
        {kind === "date" && (
          <Icon size={10} box={10}>
            <path d="M.5.5h9v9h-9zM.5 2.500h9" />
            <path d="M2.500 4.500h5M2.500 7h3" strokeDasharray="1 1" />
          </Icon>
        )}
        {kind === "sum" && (
          <Icon size={10} box={10}>
            <path d="M9 2.500V1H1.500l4 4-4 4H9V7.500" strokeWidth="1.200" />
          </Icon>
        )}
      </span>
      {name}
    </label>
  </li>
);

const DataPane = () => (
  <aside className="w-[178px] shrink-0 border-l border-[#e1dfdd] bg-[#f3f2f1] text-[9px] text-[#484644]">
    <div className="flex h-[29px] items-center justify-between pr-[5px] pl-1.5">
      <h2 className="text-[12px] font-semibold text-[#252423]">Data</h2>
      <DoubleChevron />
    </div>
    <div className="pt-1.5 pr-[3px] pb-[7px] pl-0.5">
      <PaneSearch label="Search data" className="h-[22px] pl-1" />
    </div>
    <ul className="grid h-[346px] grid-rows-18">
      <li className="flex items-center gap-1 pl-1.5">
        <Icon size={9} box={9}>
          <path d="m.5 2.500 4 4 4-4" stroke="#666" />
        </Icon>
        <Icon size={10} box={10}>
          <path d="M.5.5h9v9h-9zM.5 3.500h9M.5 6.500h9M3.500.5v9M6.500.5v9" />
          <path d="M.5 1h9" strokeWidth="2" />
        </Icon>
        Blog - Content Status
      </li>
      {fields.map((field) => (
        <FieldRow key={field.name} {...field} />
      ))}
    </ul>
  </aside>
);

/* ---------- page tabs ---------- */

const PageTabs = () => (
  <footer className="border-b-3 border-[#f8f8f7] bg-[#f3f2f1] text-[9px] text-[#484644]">
    <div className="flex h-[28px] items-stretch border-b border-[#dddbd9]">
      <div className="flex w-[134px] shrink-0 items-center pl-[41px]">
        <button
          type="button"
          aria-label="Desktop layout"
          className="flex h-[20px] w-[18px] items-start justify-center border-b-2 border-[#117865]"
        >
          <Icon size={16}>
            <path d="M.5 2.500h15v9H.5zM8 11.500v2M5 14h6" strokeWidth="1.300" />
          </Icon>
        </button>
        <button type="button" aria-label="Mobile layout" className="ml-[18px] pb-1">
          <Icon size={16}>
            <path d="M3.500.5h9v15h-9zM7 13.500h2" stroke="#777" />
          </Icon>
        </button>
        <span className="ml-3.5 flex gap-3">
          <Icon size={5} box={5}>
            <path d="M4 0v5L1 2.500z" fill="#bbb" stroke="none" />
          </Icon>
          <Icon size={5} box={5}>
            <path d="M1 0v5l3-2.500z" fill="#bbb" stroke="none" />
          </Icon>
        </span>
      </div>
      <button
        type="button"
        className="w-[77px] border-x border-b-3 border-x-[#dddbd9] border-b-[#117865] bg-white pt-1 font-semibold"
      >
        Reference
      </button>
      <button type="button" className="w-[60px] pt-0.5">
        Page 1
      </button>
      <button
        type="button"
        aria-label="New page"
        className="mt-px flex w-[31px] items-center justify-center bg-[#117865]"
      >
        <Icon size={10} box={10}>
          <path d="M5 0v10M0 5h10" stroke="#fff" strokeWidth="2.200" />
        </Icon>
      </button>
    </div>
  </footer>
);

const App = () => (
  <div className="flex min-h-screen flex-col bg-white font-['Open_Sans','Noto_Sans',sans-serif]">
    <TitleBar />
    <Ribbon />
    <div className="flex flex-1">
      <ViewRail />
      <main className="min-w-0 flex-1 px-[49px] pt-[7px]">
        <ReportPage />
      </main>
      <FiltersPane />
      <VisualizationsPane />
      <DataPane />
    </div>
    <PageTabs />
  </div>
);

export default App;
